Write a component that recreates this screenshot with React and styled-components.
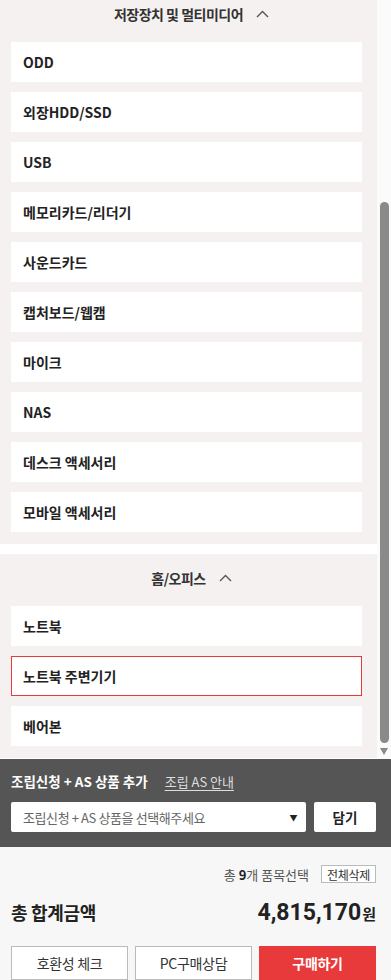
import React, { useLayoutEffect, useRef } from 'react';
import styled, { createGlobalStyle } from 'styled-components';

const sections = [
  {
    title: '저장장치 및 멀티미디어',
    items: ['ODD', '외장HDD/SSD', 'USB', '메모리카드/리더기', '사운드카드', '캡처보드/웹캠', '마이크', 'NAS', '데스크 액세서리', '모바일 액세서리'],
  },
  { title: '홈/오피스', items: ['노트북', '노트북 주변기기', '베어본'], active: '노트북 주변기기' },
];

export default function App() {
  const listRef = useRef(null);

  useLayoutEffect(() => {
    if (listRef.current) listRef.current.scrollTop = 10;
  }, []);

  return (
    <Page>
      <GlobalStyle />
      <ScrollFrame>
        <ScrollArea ref={listRef}>
          <List>
            {sections.map((section) => (
              <Section key={section.title}>
                <SectionHead>
                  <span>{section.title}</span>
                  <svg width="13" height="8" viewBox="0 0 13 8" fill="none">
                    <path d="M1 7L6.5 1.5L12 7" stroke="#555" strokeWidth="1.4" />
                  </svg>
                </SectionHead>
                <Items>
                  {section.items.map((item) => (
                    <Item key={item} $active={item === section.active}>{item}</Item>
                  ))}
                </Items>
              </Section>
            ))}
          </List>
        </ScrollArea>
        <Scrollbar>
          <Thumb />
          <DownArrow />
        </Scrollbar>
      </ScrollFrame>

      <AssemblyPanel>
        <PanelTitle>
          <strong>조립신청 + AS 상품 추가</strong>
          <a>조립 AS 안내</a>
        </PanelTitle>
        <PanelRow>
          <Select>
            <span>조립신청 + AS 상품을 선택해주세요</span>
            <Caret>▼</Caret>
          </Select>
          <AddButton>담기</AddButton>
        </PanelRow>
      </AssemblyPanel>

      <Summary>
        <CountRow>
          <span>총 <b>9</b>개 품목선택</span>
          <ClearButton>전체삭제</ClearButton>
        </CountRow>
        <TotalRow>
          <strong>총 합계금액</strong>
          <Price>4,815,170<small>원</small></Price>
        </TotalRow>
        <Actions>
          <ActionButton>호환성 체크</ActionButton>
          <ActionButton>PC구매상담</ActionButton>
          <ActionButton $primary>구매하기</ActionButton>
        </Actions>
      </Summary>
    </Page>
  );
}

const GlobalStyle = createGlobalStyle`
  * { box-sizing: border-box; }
  body {
    margin: 0;
    font-family: "Noto Sans CJK KR", "Noto Sans", sans-serif;
    color: #222;
  }
`;

const Page = styled.div`
  width: 391px;
  height: 980px;
  display: flex;
  flex-direction: column;
  background: #fff;
`;

const ScrollFrame = styled.div`
  height: 759px;
  flex: none;
  display: flex;
`;

const ScrollArea = styled.div`
  width: 377px;
  height: 100%;
  overflow: hidden;
  background: #fff;
`;

const Scrollbar = styled.div`
  width: 14px;
  height: 100%;
  background: #fbfbfb;
  display: flex;
  flex-direction: column;
  align-items: center;
  padding-top: 202px;
`;

const Thumb = styled.div`
  width: 9px;
  height: 541px;
  border-radius: 5px;
  background: #8a8a8a;
`;

const DownArrow = styled.div`
  margin-top: 5px;
  width: 0;
  height: 0;
  border-left: 4.5px solid transparent;
  border-right: 4.5px solid transparent;
  border-top: 7px solid #8a8a8a;
`;

const List = styled.div`
  display: flex;
  flex-direction: column;
  gap: 10px;
  padding-bottom: 2px;
`;

const Section = styled.section`
  background: #f5f1f0;
  padding: 0 15px 12px 11px;
`;

const SectionHead = styled.div`
  height: 52px;
  padding: 0 0 4px 10px;
  display: flex;
  align-items: center;
  justify-content: center;
  gap: 13px;
  font-size: 14px;
  font-weight: 700;
  letter-spacing: -0.5px;
  color: #333;
`;

const Items = styled.div`
  display: flex;
  flex-direction: column;
  gap: 10px;
`;

const Item = styled.div`
  height: 40px;
  display: flex;
  align-items: center;
  padding: 0 11px;
  background: #fff;
  border: 1px solid ${(p) => (p.$active ? '#e53a3c' : '#fff')};
  font-size: 14px;
  font-weight: 700;
  color: #222;
`;

const AssemblyPanel = styled.div`
  background: #555;
  height: 88px;
  flex: none;
  padding: 12px 15px 0 11px;
`;

const PanelTitle = styled.div`
  display: flex;
  align-items: center;
  gap: 17px;
  height: 20px;
  color: #fff;
  font-size: 13.5px;

  strong { font-weight: 700; }
  a {
    color: #ddd;
    font-size: 13px;
    text-decoration: underline;
    text-underline-offset: 3px;
  }
`;

const PanelRow = styled.div`
  display: flex;
  gap: 8px;
  margin-top: 11px;
`;

const Select = styled.div`
  flex: 1;
  height: 30px;
  background: #fff;
  border-radius: 2px;
  display: flex;
  align-items: center;
  justify-content: space-between;
  padding: 0 9px 0 12px;
  font-size: 13px;
  letter-spacing: -0.4px;
  color: #666;
`;

const Caret = styled.span`
  font-size: 8px;
  color: #222;
`;

const AddButton = styled.button`
  width: 62px;
  height: 30px;
  border: 0;
  border-radius: 2px;
  background: #fff;
  font-family: inherit;
  font-size: 13.5px;
  font-weight: 700;
  color: #222;
`;

const Summary = styled.div`
  flex: 1;
  background: #f7f7f7;
  padding: 18px 15px 0 11px;
`;

const CountRow = styled.div`
  display: flex;
  align-items: center;
  justify-content: flex-end;
  gap: 12px;
  height: 18px;
  font-size: 13px;
  color: #555;

  b { color: #222; font-weight: 700; }
`;

const ClearButton = styled.span`
  height: 18px;
  display: flex;
  align-items: center;
  padding: 0 5px;
  background: #fff;
  border: 1px solid #bbb;
  font-size: 12px;
  color: #333;
  letter-spacing: -0.3px;
`;

const TotalRow = styled.div`
  display: flex;
  align-items: center;
  justify-content: space-between;
  height: 40px;
  margin-top: 9px;

  strong {
    font-size: 18px;
    font-weight: 700;
    color: #222;
    letter-spacing: -0.3px;
  }
`;

const Price = styled.span`
  font-family: Roboto, "Noto Sans CJK KR", sans-serif;
  font-size: 23px;
  font-weight: 700;
  color: #222;

  small {
    font-family: "Noto Sans CJK KR", sans-serif;
    font-size: 15px;
    margin-left: 1px;
  }
`;

const Actions = styled.div`
  display: grid;
  grid-template-columns: repeat(3, 1fr);
  gap: 7px;
  margin-top: 14px;
`;

const ActionButton = styled.button`
  height: 34px;
  border: 1px solid ${(p) => (p.$primary ? '#e83a3b' : '#bbb')};
  background: ${(p) => (p.$primary ? '#e83a3b' : '#fff')};
  color: ${(p) => (p.$primary ? '#fff' : '#333')};
  font-family: inherit;
  font-size: 14px;
  font-weight: ${(p) => (p.$primary ? 700 : 400)};
  letter-spacing: -0.3px;
`;
